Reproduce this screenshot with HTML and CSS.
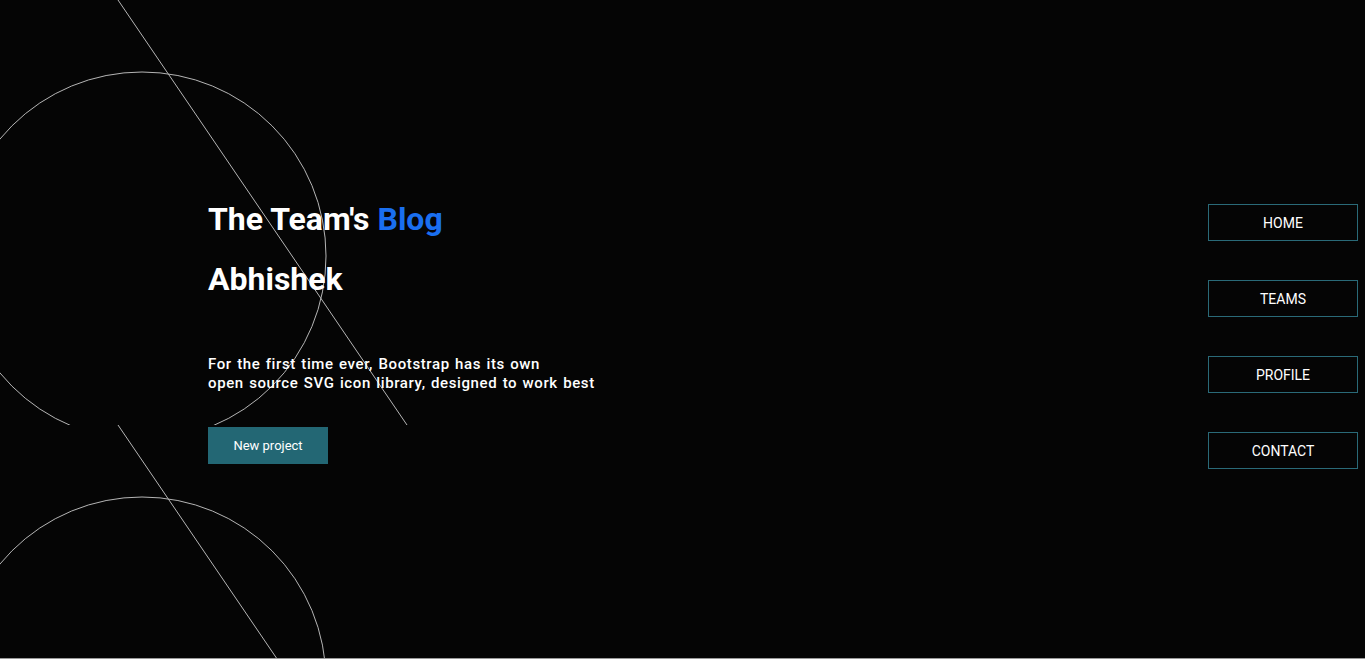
FILE: index.html
```html
<!DOCTYPE html>
<html lang="en">
<head>
<meta charset="utf-8">
<title>The Team's Blog</title>
<link rel="stylesheet" href="styles.css">
</head>
<body>
<section class="hero">
  <div class="intro">
    <h1 class="title">The Team's <span class="accent">Blog</span></h1>
    <h2 class="name">Abhishek</h2>
    <p class="lead">For the first time ever, Bootstrap has its own<br>open source SVG icon library, designed to work best</p>
    <a class="btn" href="#">New project</a>
  </div>
  <nav class="side-nav">
    <a class="nav-item" href="#">HOME</a>
    <a class="nav-item" href="#">TEAMS</a>
    <a class="nav-item" href="#">PROFILE</a>
    <a class="nav-item" href="#">CONTACT</a>
  </nav>
</section>
</body>
</html>
```
FILE: styles.css
```css
html, body {
  margin: 0;
  padding: 0;
  background: #050505;
  overflow: hidden;
}
body {
  font-family: Roboto, "Liberation Sans", Arial, sans-serif;
  color: #fff;
}
.hero {
  height: 658px;
  border-bottom: 1px solid #9a9a9a;
  display: flex;
  justify-content: space-between;
  align-items: flex-start;
  background-color: #050505;
  background-image: url("data:image/svg+xml,%3Csvg xmlns='http://www.w3.org/2000/svg' width='420' height='425'%3E%3Ccircle cx='142' cy='256' r='184' fill='none' stroke='%23b4b4b4' stroke-width='1'/%3E%3Cline x1='118' y1='0' x2='407' y2='425' stroke='%23b4b4b4' stroke-width='1'/%3E%3C/svg%3E");
  background-repeat: repeat-y;
  background-position: 0 0;
  background-size: 420px 425px;
}
.intro {
  padding: 199px 0 0 208px;
  display: flex;
  flex-direction: column;
  align-items: flex-start;
}
.title {
  margin: 0;
  font-size: 32px;
  font-weight: 700;
  line-height: 40px;
}
.accent {
  color: #1a6ff0;
}
.name {
  margin: 20px 0 0;
  font-size: 32px;
  font-weight: 700;
  line-height: 40px;
}
.lead {
  margin: 56px 0 0;
  font-size: 15px;
  font-weight: 500;
  line-height: 19px;
  letter-spacing: 0.62px;
  word-spacing: 1px;
}
.btn {
  margin-top: 34px;
  width: 120px;
  height: 37px;
  display: flex;
  align-items: center;
  justify-content: center;
  background: #236774;
  color: #fff;
  font-size: 13px;
  text-decoration: none;
}
.side-nav {
  margin: 204px 7px 0 0;
  display: flex;
  flex-direction: column;
  gap: 39px;
}
.nav-item {
  width: 148px;
  height: 35px;
  border: 1px solid #2a6a78;
  display: flex;
  align-items: center;
  justify-content: center;
  color: #fff;
  font-size: 14px;
  text-decoration: none;
}
```
